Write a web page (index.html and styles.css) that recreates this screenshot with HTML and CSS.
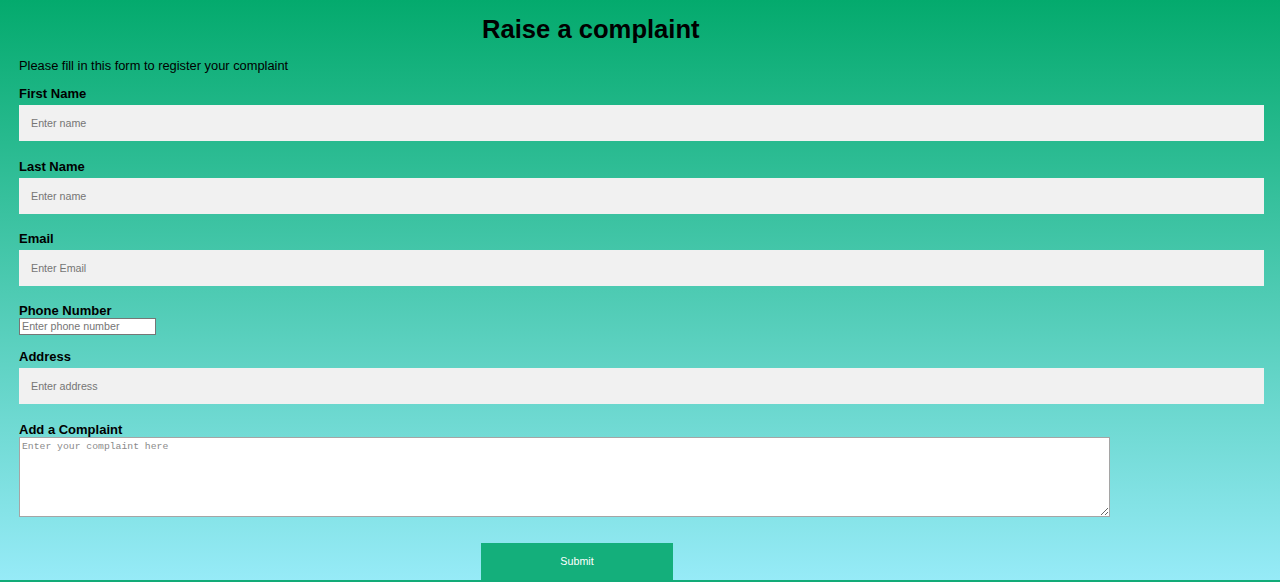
FILE: index.html
```html
<!DOCTYPE html>
<html lang="en">
<head>
<meta charset="utf-8">
<title>Raise a complaint</title>
<link rel="stylesheet" href="styles.css">
</head>
<body>
<main class="page">
  <form class="form">
    <h1 class="title">Raise a complaint</h1>
    <p class="intro">Please fill in this form to register your complaint</p>

    <label class="label label-boxed label-first" for="fname">First Name</label>
    <input class="field" id="fname" type="text" placeholder="Enter name">

    <label class="label label-boxed label-gap17" for="lname">Last Name</label>
    <input class="field" id="lname" type="text" placeholder="Enter name">

    <label class="label label-boxed label-gap16" for="email">Email</label>
    <input class="field" id="email" type="text" placeholder="Enter Email">

    <label class="label label-gap17" for="phone">Phone Number</label>
    <input class="phone" id="phone" type="tel" placeholder="Enter phone number">

    <label class="label label-boxed label-gap13" for="address">Address</label>
    <input class="field" id="address" type="text" placeholder="Enter address">

    <label class="label label-gap18" for="complaint">Add a Complaint</label>
    <textarea class="complaint" id="complaint" placeholder="Enter your complaint here"></textarea>

    <button class="submit" type="button">Submit</button>
  </form>
</main>
<div class="strip"></div>
</body>
</html>
```

FILE: styles.css
```css
html, body {
  margin: 0;
  padding: 0;
}

body {
  height: 582px;
  overflow: hidden;
  display: flex;
  flex-direction: column;
  background: linear-gradient(180deg, #04aa6d 0%, #97ebf8 100%);
  font-family: "Liberation Sans", Arial, sans-serif;
  color: #000;
}

.page {
  flex: 1;
  padding: 0 16px 0 19px;
}

.form {
  display: flex;
  flex-direction: column;
  align-items: flex-start;
}

.title {
  margin: 14px 0 0 463px;
  font-size: 25.6px;
  line-height: 30px;
  font-weight: bold;
}

.intro {
  margin: 14px 0 0;
  font-size: 12.85px;
  line-height: 15px;
}

.label {
  font-size: 13px;
  line-height: 15px;
  font-weight: bold;
}

.label-boxed { padding-top: 1px; }

.label-first { margin-top: 12px; }
.label-gap13 { margin-top: 13px; }
.label-gap16 { margin-top: 16px; }
.label-gap17 { margin-top: 17px; }
.label-gap18 { margin-top: 18px; }

.field {
  box-sizing: border-box;
  align-self: stretch;
  height: 36px;
  margin-top: 4px;
  padding: 0 12px 1px;
  border: none;
  background: #f1f1f1;
  font-family: "Liberation Sans", Arial, sans-serif;
  font-size: 10.7px;
  color: #000;
  outline: none;
}

.field::placeholder,
.phone::placeholder {
  color: #757575;
}

.phone {
  box-sizing: border-box;
  width: 137px;
  height: 17px;
  margin: 0;
  padding: 0 2px 1px;
  border: 1px solid #767676;
  background: #fff;
  font-family: "Liberation Sans", Arial, sans-serif;
  font-size: 10.7px;
}

.complaint {
  box-sizing: border-box;
  width: 1091px;
  height: 80px;
  margin: 0;
  padding: 3px 2px;
  border: 1px solid #a5a5a5;
  background: #fff;
  font-family: "Liberation Mono", "DejaVu Sans Mono", monospace;
  font-size: 9.75px;
  line-height: 12px;
}

.complaint::placeholder {
  color: #8a8a8a;
}

.submit {
  box-sizing: border-box;
  width: 192px;
  height: 37px;
  margin: 26px 0 0 462px;
  padding: 0 0 1px;
  border: none;
  background: #14af7b;
  color: #fff;
  font-family: "Liberation Sans", Arial, sans-serif;
  font-size: 10.7px;
  cursor: pointer;
}

.strip {
  height: 2px;
  background: #12ab78;
}
```
